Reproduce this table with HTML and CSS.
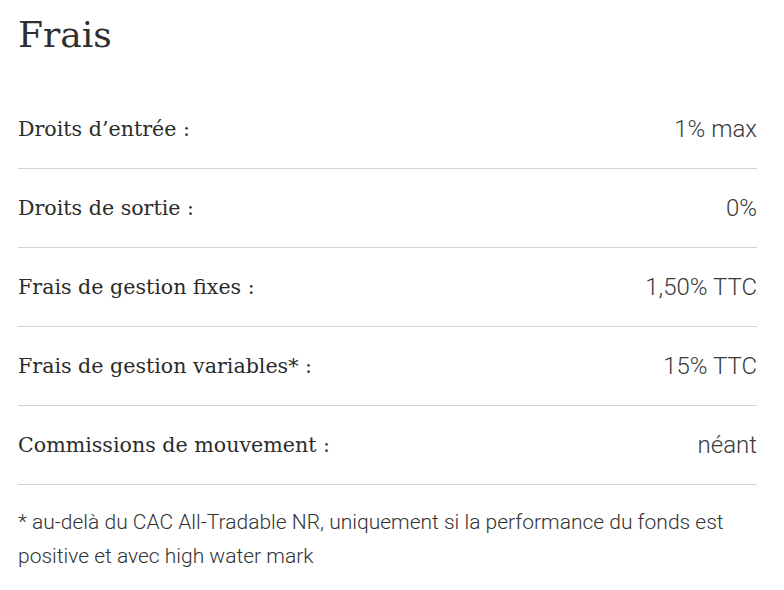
FILE: index.html
```html
<!DOCTYPE html>
<html lang="fr">
<head>
<meta charset="utf-8">
<link rel="stylesheet" href="styles.css">
</head>
<body>
<section class="fees">
  <h2 class="fees-title">Frais</h2>
  <div class="fees-list">
    <div class="fee-row"><span class="fee-label">Droits d’entrée :</span><span class="fee-value">1% max</span></div>
    <div class="fee-row"><span class="fee-label">Droits de sortie :</span><span class="fee-value">0%</span></div>
    <div class="fee-row"><span class="fee-label">Frais de gestion fixes :</span><span class="fee-value">1,50% TTC</span></div>
    <div class="fee-row"><span class="fee-label">Frais de gestion variables* :</span><span class="fee-value">15% TTC</span></div>
    <div class="fee-row"><span class="fee-label">Commissions de mouvement :</span><span class="fee-value">néant</span></div>
  </div>
  <p class="fees-note">* au-delà du CAC All-Tradable NR, uniquement si la performance du fonds est positive et avec high water mark</p>
</section>
</body>
</html>
```
FILE: styles.css
```css
html, body {
  margin: 0;
  padding: 0;
  background: #ffffff;
}

.fees {
  width: 739px;
  padding: 10px 0 0 18px;
  color: #333333;
}

.fees-title {
  margin: 0 0 30px 0;
  font-family: "DejaVu Serif", Georgia, serif;
  font-weight: normal;
  font-size: 36px;
  line-height: 50px;
  color: #2e2e2e;
}

.fees-list {
  display: flex;
  flex-direction: column;
}

.fee-row {
  display: flex;
  justify-content: space-between;
  align-items: center;
  height: 78px;
  border-bottom: 1px solid #d3d3d3;
}

.fee-label {
  font-family: "DejaVu Serif", Georgia, serif;
  font-size: 20.6px;
  color: #2b2b2b;
}

.fee-value {
  font-family: Roboto, "Liberation Sans", sans-serif;
  font-weight: 300;
  font-size: 24px;
  color: #3a3a3a;
}

.fees-note {
  margin: 20px 0 0 0;
  font-family: Roboto, "Liberation Sans", sans-serif;
  font-weight: 300;
  font-size: 21px;
  line-height: 34px;
  color: #333333;
}
```
